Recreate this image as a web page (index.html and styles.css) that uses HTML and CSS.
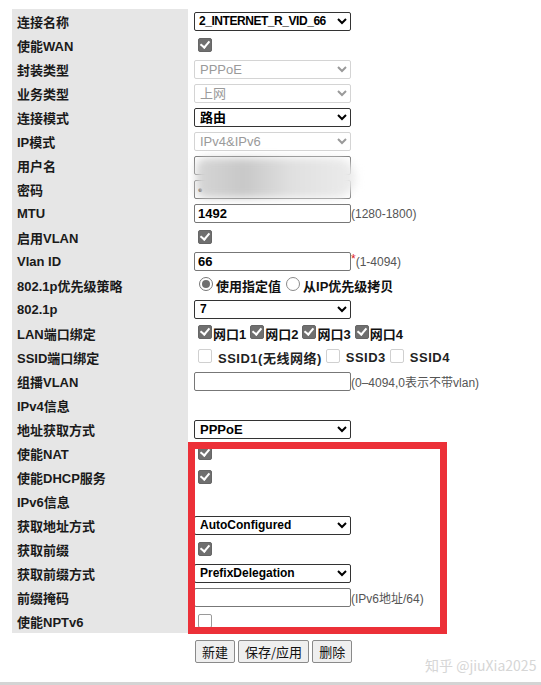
FILE: index.html
```html
<!DOCTYPE html>
<html lang="zh-CN">
<head>
  <meta charset="UTF-8" />
  <title>WAN配置</title>
  <link rel="stylesheet" href="styles.css">
</head>
<body>
  <div class="page">
    <table class="cfg">
      <tr><td class="lbl">连接名称</td><td class="val"><select class="sel tight"><option>2_INTERNET_R_VID_66</option></select></td></tr>
      <tr><td class="lbl">使能WAN</td><td class="val"><span class="cb on"></span></td></tr>
      <tr><td class="lbl">封装类型</td><td class="val"><select class="sel off" disabled><option>PPPoE</option></select></td></tr>
      <tr><td class="lbl">业务类型</td><td class="val"><select class="sel off" disabled><option>上网</option></select></td></tr>
      <tr><td class="lbl">连接模式</td><td class="val"><select class="sel cjk"><option>路由</option></select></td></tr>
      <tr><td class="lbl">IP模式</td><td class="val"><select class="sel off" disabled><option>IPv4&amp;IPv6</option></select></td></tr>
      <tr><td class="lbl">用户名</td><td class="val"><input class="txt" type="text" value=""></td></tr>
      <tr><td class="lbl">密码</td><td class="val"><input class="txt" type="text" value="•"></td></tr>
      <tr><td class="lbl">MTU</td><td class="val"><input class="txt" type="text" value="1492"><span class="hint">(1280-1800)</span></td></tr>
      <tr><td class="lbl">启用VLAN</td><td class="val"><span class="cb on"></span></td></tr>
      <tr><td class="lbl">Vlan ID</td><td class="val"><input class="txt" type="text" value="66"><span class="req">*</span><span class="hint">(1-4094)</span></td></tr>
      <tr><td class="lbl">802.1p优先级策略</td><td class="val"><span class="rd on"></span><span class="opt">使用指定值</span><span class="rd"></span><span class="opt">从IP优先级拷贝</span></td></tr>
      <tr><td class="lbl">802.1p</td><td class="val"><select class="sel"><option>7</option></select></td></tr>
      <tr><td class="lbl">LAN端口绑定</td><td class="val"><span class="cb on sm"></span><span class="opt">网口1</span><span class="cb on sm"></span><span class="opt">网口2</span><span class="cb on sm"></span><span class="opt">网口3</span><span class="cb on sm"></span><span class="opt">网口4</span></td></tr>
      <tr><td class="lbl">SSID端口绑定</td><td class="val"><span class="cb dim"></span><span class="opt ssid">SSID1(无线网络)</span><span class="cb dim"></span><span class="opt ssid">SSID3</span><span class="cb dim"></span><span class="opt ssid">SSID4</span></td></tr>
      <tr><td class="lbl">组播VLAN</td><td class="val"><input class="txt" type="text" value=""><span class="hint">(0–4094,0表示不带vlan)</span></td></tr>
      <tr><td class="lbl">IPv4信息</td><td class="val"></td></tr>
      <tr><td class="lbl">地址获取方式</td><td class="val"><select class="sel mid"><option>PPPoE</option></select></td></tr>
      <tr><td class="lbl">使能NAT</td><td class="val"><span class="cb on"></span></td></tr>
      <tr><td class="lbl">使能DHCP服务</td><td class="val"><span class="cb on"></span></td></tr>
      <tr><td class="lbl">IPv6信息</td><td class="val"></td></tr>
      <tr><td class="lbl">获取地址方式</td><td class="val"><select class="sel"><option>AutoConfigured</option></select></td></tr>
      <tr><td class="lbl">获取前缀</td><td class="val"><span class="cb on"></span></td></tr>
      <tr><td class="lbl">获取前缀方式</td><td class="val"><select class="sel"><option>PrefixDelegation</option></select></td></tr>
      <tr><td class="lbl">前缀掩码</td><td class="val"><input class="txt" type="text" value=""><span class="hint">(IPv6地址/64)</span></td></tr>
      <tr><td class="lbl">使能NPTv6</td><td class="val"><span class="cb"></span></td></tr>
    </table>

    <div class="actions">
      <button class="btn">新建</button>
      <button class="btn">保存/应用</button>
      <button class="btn">删除</button>
    </div>

    <!-- annotations on the screenshot -->
    <div class="blur"></div>
    <div class="mark"></div>
    <div class="wm">知乎 @jiuXia2025</div>
  </div>
  <div class="bottom-bar"></div>
</body>
</html>
```

FILE: styles.css
```css
body {
  margin: 0;
  background: #fff;
  font-family: "Liberation Sans", "Noto Sans CJK SC", sans-serif;
  color: #111;
}

.page {
  position: relative;
  height: 682px;
  padding: 9px 0 0 12px;
  box-sizing: border-box;
}

.cfg {
  border-collapse: collapse;
}

.cfg td {
  height: 24px;
  padding: 0;
  vertical-align: middle;
  white-space: nowrap;
}

.lbl {
  width: 171px;
  padding-left: 5px !important;
  background: #e6e6e6;
  font-size: 13px;
  font-weight: bold;
  color: #1a1a1a;
}

.val {
  padding-left: 6px !important;
  font-size: 13px;
}

.sel {
  width: 157px;
  height: 19px;
  padding: 0 0 0 1px;
  border: 1px solid #333;
  border-radius: 2px;
  background: #fff;
  font-family: "Liberation Sans", "Noto Sans CJK SC", sans-serif;
  font-size: 12px;
  font-weight: bold;
  color: #000;
  vertical-align: middle;
}

.sel.tight {
  padding: 0;
  letter-spacing: -0.45px;
}

.sel.cjk {
  font-size: 13px;
}

.sel.mid {
  font-size: 13px;
  font-weight: 600;
}

.sel.off {
  border-color: #d4d4d4;
  color: #9a9a9a;
  font-size: 13px;
  font-weight: normal;
  opacity: 1;
}

.txt {
  width: 157px;
  height: 19px;
  box-sizing: border-box;
  padding: 0 3px;
  border: 1px solid #777;
  border-radius: 2px;
  font-family: "Liberation Sans", "Noto Sans CJK SC", sans-serif;
  font-size: 13px;
  font-weight: bold;
  color: #000;
  vertical-align: middle;
}

.hint {
  font-size: 12px;
  color: #555;
  vertical-align: middle;
}

.req {
  color: #d22;
  font-size: 12px;
  vertical-align: top;
}

.cb {
  display: inline-block;
  width: 12px;
  height: 12px;
  margin: 0 3px 0 4px;
  border: 1px solid #9a9a9a;
  border-radius: 2px;
  background: #fff;
  vertical-align: middle;
  position: relative;
  top: -1px;
}

.cb.on {
  border-color: #666;
  background: #6f6f6f;
}

.cb.on::after {
  content: "";
  position: absolute;
  left: 3px;
  top: 0px;
  width: 4px;
  height: 7px;
  border: solid #fff;
  border-width: 0 2px 2px 0;
  transform: rotate(40deg);
}

.cb.dim {
  border-color: #d0d0d0;
}

.cb.sm {
  margin: 0 1px 0 4px;
}

.rd {
  display: inline-block;
  width: 12px;
  height: 12px;
  margin: 0 3px 0 5px;
  border: 1px solid #8a8a8a;
  border-radius: 50%;
  background: #fff;
  vertical-align: middle;
  position: relative;
  top: -1px;
}

.rd.on {
  border-color: #777;
}

.rd.on::after {
  content: "";
  position: absolute;
  left: 2px;
  top: 2px;
  width: 8px;
  height: 8px;
  border-radius: 50%;
  background: #6f6f6f;
}

.opt {
  font-size: 13px;
  font-weight: bold;
  color: #111;
  vertical-align: middle;
}

.opt.ssid {
  letter-spacing: 0.5px;
  color: #222;
  margin-left: 3px;
}

.actions {
  display: flex;
  gap: 3px;
  margin: 7px 0 0 183px;
}

.btn {
  height: 23px;
  padding: 0 6px;
  border: 1px solid #8a8a8a;
  border-radius: 2px;
  background: #efefef;
  font-family: "Noto Sans CJK SC", sans-serif;
  font-size: 13px;
  color: #111;
}

.blur {
  position: absolute;
  left: 196px;
  top: 158px;
  width: 160px;
  height: 40px;
  border-radius: 14px 30px 30px 14px;
  background: linear-gradient(90deg, #d6d6d6 0%, #c8c8c8 30%, #e0e0e0 60%, #ececec 100%);
  filter: blur(4px);
}

.mark {
  position: absolute;
  left: 188px;
  top: 442px;
  width: 259px;
  height: 192px;
  box-sizing: border-box;
  border: 7px solid #ec3038;
}

.wm {
  position: absolute;
  left: 425px;
  top: 655px;
  font-family: "Noto Sans CJK SC", sans-serif;
  font-size: 14px;
  color: #d6d6d6;
}

.bottom-bar {
  height: 3px;
  background: #d4d4d4;
}
```
